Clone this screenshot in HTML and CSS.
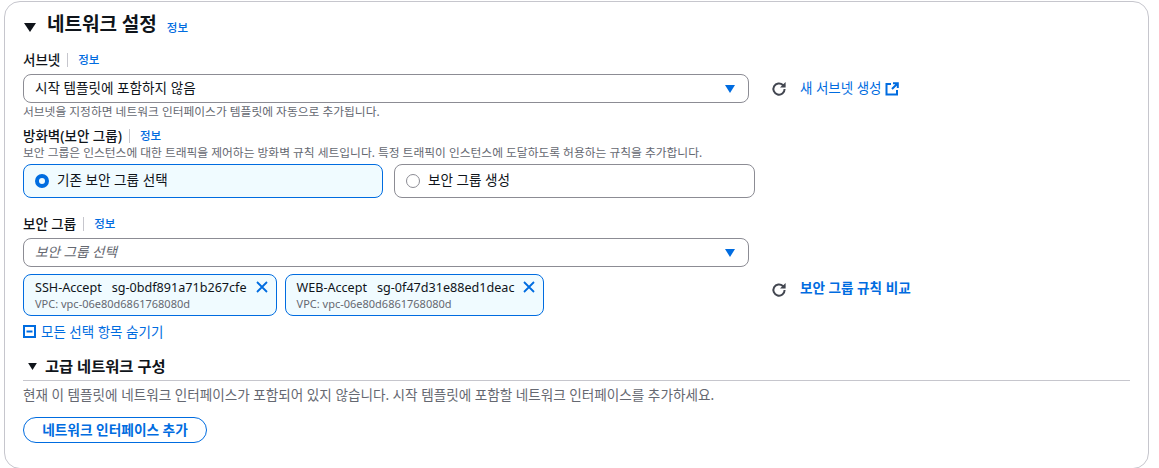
FILE: index.html
```html
<!DOCTYPE html>
<html lang="ko">

<head>
    <meta charset="UTF-8">
    <title>네트워크 설정</title>
    <link rel="stylesheet" href="styles.css">
</head>

<body>
    <div class="panel">
        <div class="panel-head">
            <svg class="caret-big" viewBox="0 0 12 9"><path d="M0 0h12L6 9z" /></svg>
            <h2>네트워크 설정</h2>
            <a class="info">정보</a>
        </div>

        <div class="label label-subnet"><b>서브넷</b><i></i><a class="info">정보</a></div>
        <div class="row">
            <div class="select">
                <span>시작 템플릿에 포함하지 않음</span>
                <svg class="select-arrow" viewBox="0 0 10 8"><path d="M0 0h10L5 8z" /></svg>
            </div>
            <svg class="refresh" viewBox="0 0 16 16"><path d="M13.6 8a5.6 5.6 0 1 1-1.7-4L13.6 5.6" /><path class="fill" d="M14.6 1v5.6H9z" /></svg>
            <a class="side-link">새 서브넷 생성</a>
            <svg class="ext" viewBox="0 0 14 14"><path d="M6 2H1.5v10.5H12V8" /><path d="M7 7l5-5M8 1.2h4.8V6" /></svg>
        </div>
        <p class="hint hint-subnet">서브넷을 지정하면 네트워크 인터페이스가 템플릿에 자동으로 추가됩니다.</p>

        <div class="label label-fw"><b>방화벽(보안 그룹)</b><i></i><a class="info">정보</a></div>
        <p class="hint hint-fw">보안 그룹은 인스턴스에 대한 트래픽을 제어하는 방화벽 규칙 세트입니다. 특정 트래픽이 인스턴스에 도달하도록 허용하는 규칙을 추가합니다.</p>
        <div class="cards">
            <div class="card on"><span class="radio"></span><span class="card-text">기존 보안 그룹 선택</span></div>
            <div class="card"><span class="radio"></span><span class="card-text">보안 그룹 생성</span></div>
        </div>

        <div class="label label-sg"><b>보안 그룹</b><i></i><a class="info">정보</a></div>
        <div class="select placeholder">
            <span>보안 그룹 선택</span>
            <svg class="select-arrow" viewBox="0 0 10 8"><path d="M0 0h10L5 8z" /></svg>
        </div>

        <div class="row tokens-row">
            <div class="tokens">
                <div class="token">
                    <div class="token-text">
                        <div class="token-name">SSH-Accept<span>sg-0bdf891a71b267cfe</span></div>
                        <div class="token-vpc">VPC: vpc-06e80d6861768080d</div>
                    </div>
                    <svg class="close" viewBox="0 0 12 12"><path d="M1 1l10 10M11 1L1 11" /></svg>
                </div>
                <div class="token">
                    <div class="token-text">
                        <div class="token-name">WEB-Accept<span>sg-0f47d31e88ed1deac</span></div>
                        <div class="token-vpc">VPC: vpc-06e80d6861768080d</div>
                    </div>
                    <svg class="close" viewBox="0 0 12 12"><path d="M1 1l10 10M11 1L1 11" /></svg>
                </div>
            </div>
            <svg class="refresh" viewBox="0 0 16 16"><path d="M13.6 8a5.6 5.6 0 1 1-1.7-4L13.6 5.6" /><path class="fill" d="M14.6 1v5.6H9z" /></svg>
            <a class="side-link strong">보안 그룹 규칙 비교</a>
        </div>

        <div class="hide-all">
            <svg class="minus" viewBox="0 0 13 13"><rect x="1" y="1" width="11" height="11" /><path d="M3.5 6.5h6" /></svg>
            <a>모든 선택 항목 숨기기</a>
        </div>

        <div class="sub-head">
            <svg class="caret-small" viewBox="0 0 10 8"><path d="M0 0h10L5 8z" /></svg>
            <h3>고급 네트워크 구성</h3>
        </div>
        <p class="sub-desc">현재 이 템플릿에 네트워크 인터페이스가 포함되어 있지 않습니다. 시작 템플릿에 포함할 네트워크 인터페이스를 추가하세요.</p>
        <button class="add-btn">네트워크 인터페이스 추가</button>
    </div>
</body>

</html>
```

FILE: styles.css
```css
* {
    margin: 0;
    padding: 0;
    box-sizing: border-box;
}

html, body {
    height: 468px;
    overflow: hidden;
}

body {
    background: #fff;
    color: #0f141a;
    font-family: "Noto Sans", "Noto Sans CJK KR", sans-serif;
    font-size: 13px;
}

a {
    color: #006ce0;
}

.panel {
    width: 1145px;
    height: 468px;
    margin: 1px 0 0 4px;
    padding: 0 18px;
    border: 1px solid #c6c6cd;
    border-radius: 16px;
}

.panel-head {
    display: flex;
    align-items: center;
    height: 48px;
}

.caret-big {
    width: 12px;
    height: 9px;
    margin: 3px 11px 0 1px;
    fill: #0f141a;
}

.panel-head h2 {
    padding-bottom: 4px;
    font-size: 19px;
    line-height: 44px;
    font-weight: 700;
}

.panel-head .info {
    margin: 2px 0 0 10px;
}

.info {
    font-size: 11.5px;
    font-weight: 500;
}

.label {
    display: flex;
    align-items: center;
    height: 18px;
    line-height: 18px;
}

.label b {
    font-size: 13.5px;
    font-weight: 500;
}

.label i {
    width: 1px;
    height: 14px;
    margin: 0 10px 0 7px;
    background: #c6c6cd;
}

.label-subnet {
    margin-top: 1px;
}

.label-fw {
    margin-top: 8px;
}

.label-sg {
    margin-top: 17px;
}

.row {
    display: flex;
    align-items: center;
}

.select {
    display: flex;
    align-items: center;
    justify-content: space-between;
    width: 726px;
    height: 29px;
    padding: 0 13px 0 11px;
    border: 1px solid #8c8c94;
    border-radius: 8px;
    font-size: 13.6px;
    flex: none;
}

.select span {
    margin-bottom: 4px;
}

.label-subnet + .row {
    margin-top: 5px;
}

.label-sg + .select {
    margin-top: 5px;
}

.placeholder span {
    color: #656871;
    font-style: italic;
}

.select-arrow {
    width: 10px;
    height: 8px;
    fill: #006ce0;
}

.refresh {
    width: 16px;
    height: 16px;
    margin: 0 13px 0 22px;
    fill: none;
    stroke: #424650;
    stroke-width: 2;
    flex: none;
}

.refresh .fill {
    fill: #424650;
    stroke: none;
}

.tokens-row .refresh {
    align-self: flex-start;
    margin-top: 8px;
}

.side-link {
    margin-bottom: 4px;
    font-size: 13.5px;
}

.side-link.strong {
    align-self: flex-start;
    margin: 3px 0 0;
    font-size: 13.6px;
    font-weight: 700;
}

.ext {
    width: 14px;
    height: 14px;
    margin-left: 3px;
    fill: none;
    stroke: #006ce0;
    stroke-width: 2;
}

.hint {
    font-size: 11.75px;
    color: #656871;
    line-height: 15px;
}

.hint-subnet {
    margin-top: 1px;
}

.cards {
    display: flex;
    gap: 11px;
    margin-top: 4px;
}

.card {
    display: flex;
    align-items: center;
    width: 361px;
    height: 34px;
    padding: 0 11px;
    border: 1px solid #8c8c94;
    border-radius: 8px;
    font-size: 13.6px;
}

.card.on {
    width: 360px;
    background: #f0fbff;
    border-color: #006ce0;
}

.card-text {
    margin-bottom: 4px;
}

.radio {
    width: 14px;
    height: 14px;
    margin-right: 8px;
    border: 1.5px solid #8c8c94;
    border-radius: 50%;
}

.on .radio {
    border: 4px solid #006ce0;
}

.tokens-row {
    margin-top: 7px;
}

.tokens {
    display: flex;
    gap: 8px;
    width: 726px;
    flex: none;
}

.token {
    display: flex;
    height: 42px;
    padding: 4px 8px 0 11px;
    background: #f0fbff;
    border: 1px solid #006ce0;
    border-radius: 8px;
}

.token-name {
    font-size: 12.6px;
    line-height: 17px;
    white-space: nowrap;
}

.token-name span {
    margin-left: 10px;
}

.token-vpc {
    margin-top: 1px;
    font-size: 11px;
    line-height: 14px;
    color: #656871;
}

.close {
    width: 12px;
    height: 12px;
    margin: 2px 0 0 9px;
    fill: none;
    stroke: #006ce0;
    stroke-width: 1.8;
}

.hide-all {
    display: flex;
    align-items: center;
    height: 18px;
    margin-top: 6px;
    font-size: 13.5px;
}

.minus {
    width: 13px;
    height: 13px;
    margin-right: 5px;
    fill: none;
    stroke: #006ce0;
    stroke-width: 2;
}

.sub-head {
    display: flex;
    align-items: center;
    width: 1107px;
    height: 26px;
    margin-top: 15px;
    padding-bottom: 3px;
    border-bottom: 1px solid #c6c6cd;
}

.caret-small {
    width: 9px;
    height: 7px;
    margin: 0 8px 0 5px;
    fill: #0f141a;
}

.sub-head h3 {
    margin-bottom: 2px;
    font-size: 15.3px;
    font-weight: 700;
}

.sub-desc {
    margin-top: 6px;
    font-size: 13.6px;
    line-height: 16px;
    color: #656871;
}

.add-btn {
    display: block;
    width: 184px;
    height: 26px;
    margin-top: 14px;
    padding-bottom: 2px;
    background: #fff;
    border: 1px solid #006ce0;
    border-radius: 13px;
    color: #006ce0;
    font: 700 13.7px "Noto Sans", "Noto Sans CJK KR", sans-serif;
}
```
